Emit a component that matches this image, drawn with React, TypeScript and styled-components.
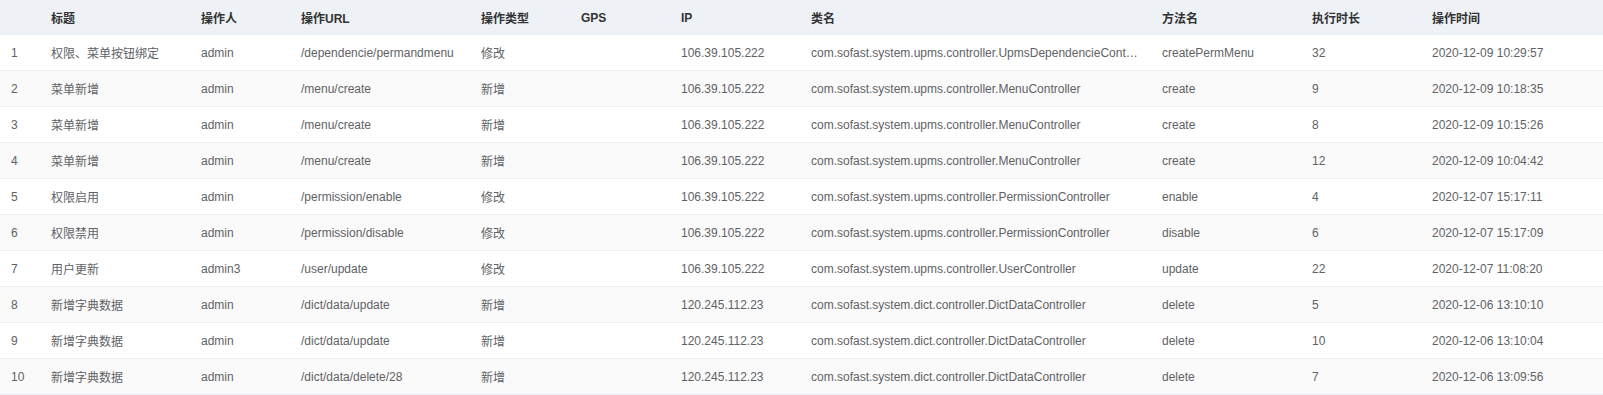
import React from "react";
import styled, { createGlobalStyle } from "styled-components";

const GlobalStyle = createGlobalStyle`
  html, body { margin: 0; padding: 0; background: #ffffff; }
  body { font-family: "Liberation Sans", "Noto Sans CJK SC", Arial, sans-serif; }
`;

type Row = {
  title: string;
  user: string;
  url: string;
  type: string;
  gps: string;
  ip: string;
  cls: string;
  method: string;
  time: string;
  date: string;
};

const rows: Row[] = [
  { title: "权限、菜单按钮绑定", user: "admin", url: "/dependencie/permandmenu", type: "修改", gps: "", ip: "106.39.105.222", cls: "com.sofast.system.upms.controller.UpmsDependencieController", method: "createPermMenu", time: "32", date: "2020-12-09 10:29:57" },
  { title: "菜单新增", user: "admin", url: "/menu/create", type: "新增", gps: "", ip: "106.39.105.222", cls: "com.sofast.system.upms.controller.MenuController", method: "create", time: "9", date: "2020-12-09 10:18:35" },
  { title: "菜单新增", user: "admin", url: "/menu/create", type: "新增", gps: "", ip: "106.39.105.222", cls: "com.sofast.system.upms.controller.MenuController", method: "create", time: "8", date: "2020-12-09 10:15:26" },
  { title: "菜单新增", user: "admin", url: "/menu/create", type: "新增", gps: "", ip: "106.39.105.222", cls: "com.sofast.system.upms.controller.MenuController", method: "create", time: "12", date: "2020-12-09 10:04:42" },
  { title: "权限启用", user: "admin", url: "/permission/enable", type: "修改", gps: "", ip: "106.39.105.222", cls: "com.sofast.system.upms.controller.PermissionController", method: "enable", time: "4", date: "2020-12-07 15:17:11" },
  { title: "权限禁用", user: "admin", url: "/permission/disable", type: "修改", gps: "", ip: "106.39.105.222", cls: "com.sofast.system.upms.controller.PermissionController", method: "disable", time: "6", date: "2020-12-07 15:17:09" },
  { title: "用户更新", user: "admin3", url: "/user/update", type: "修改", gps: "", ip: "106.39.105.222", cls: "com.sofast.system.upms.controller.UserController", method: "update", time: "22", date: "2020-12-07 11:08:20" },
  { title: "新增字典数据", user: "admin", url: "/dict/data/update", type: "新增", gps: "", ip: "120.245.112.23", cls: "com.sofast.system.dict.controller.DictDataController", method: "delete", time: "5", date: "2020-12-06 13:10:10" },
  { title: "新增字典数据", user: "admin", url: "/dict/data/update", type: "新增", gps: "", ip: "120.245.112.23", cls: "com.sofast.system.dict.controller.DictDataController", method: "delete", time: "10", date: "2020-12-06 13:10:04" },
  { title: "新增字典数据", user: "admin", url: "/dict/data/delete/28", type: "新增", gps: "", ip: "120.245.112.23", cls: "com.sofast.system.dict.controller.DictDataController", method: "delete", time: "7", date: "2020-12-06 13:09:56" },
];

const columns = [
  { key: "index", label: "", width: 40 },
  { key: "title", label: "标题", width: 150 },
  { key: "user", label: "操作人", width: 100 },
  { key: "url", label: "操作URL", width: 180 },
  { key: "type", label: "操作类型", width: 100 },
  { key: "gps", label: "GPS", width: 100 },
  { key: "ip", label: "IP", width: 130 },
  { key: "cls", label: "类名", width: 351 },
  { key: "method", label: "方法名", width: 150 },
  { key: "time", label: "执行时长", width: 120 },
  { key: "date", label: "操作时间", width: 182 },
];

const Table = styled.table`
  width: 1603px;
  table-layout: fixed;
  border-collapse: separate;
  border-spacing: 0;
  font-size: 12px;
`;

const HeadCell = styled.th`
  height: 35px;
  padding: 0 10px 0 11px;
  background: #eef1f6;
  color: #333333;
  font-weight: 700;
  text-align: left;
  white-space: nowrap;
  overflow: hidden;
  text-overflow: ellipsis;
  box-sizing: border-box;
`;

const BodyRow = styled.tr<{ $striped: boolean }>`
  background: ${(p) => (p.$striped ? "#fafafa" : "#ffffff")};
`;

const Cell = styled.td`
  height: 36px;
  padding: 0 10px 0 11px;
  color: #606266;
  white-space: nowrap;
  overflow: hidden;
  text-overflow: ellipsis;
  box-sizing: border-box;
  border-bottom: 1px solid #ebeef5;
`;

export default function App() {
  return (
    <>
      <GlobalStyle />
      <Table>
        <colgroup>
          {columns.map((c) => (
            <col key={c.key} style={{ width: c.width }} />
          ))}
        </colgroup>
        <thead>
          <tr>
            {columns.map((c) => (
              <HeadCell key={c.key}>{c.label}</HeadCell>
            ))}
          </tr>
        </thead>
        <tbody>
          {rows.map((r, i) => (
            <BodyRow key={i} $striped={i % 2 === 1}>
              <Cell>{i + 1}</Cell>
              <Cell>{r.title}</Cell>
              <Cell>{r.user}</Cell>
              <Cell>{r.url}</Cell>
              <Cell>{r.type}</Cell>
              <Cell>{r.gps}</Cell>
              <Cell>{r.ip}</Cell>
              <Cell>{r.cls}</Cell>
              <Cell>{r.method}</Cell>
              <Cell>{r.time}</Cell>
              <Cell>{r.date}</Cell>
            </BodyRow>
          ))}
        </tbody>
      </Table>
    </>
  );
}
